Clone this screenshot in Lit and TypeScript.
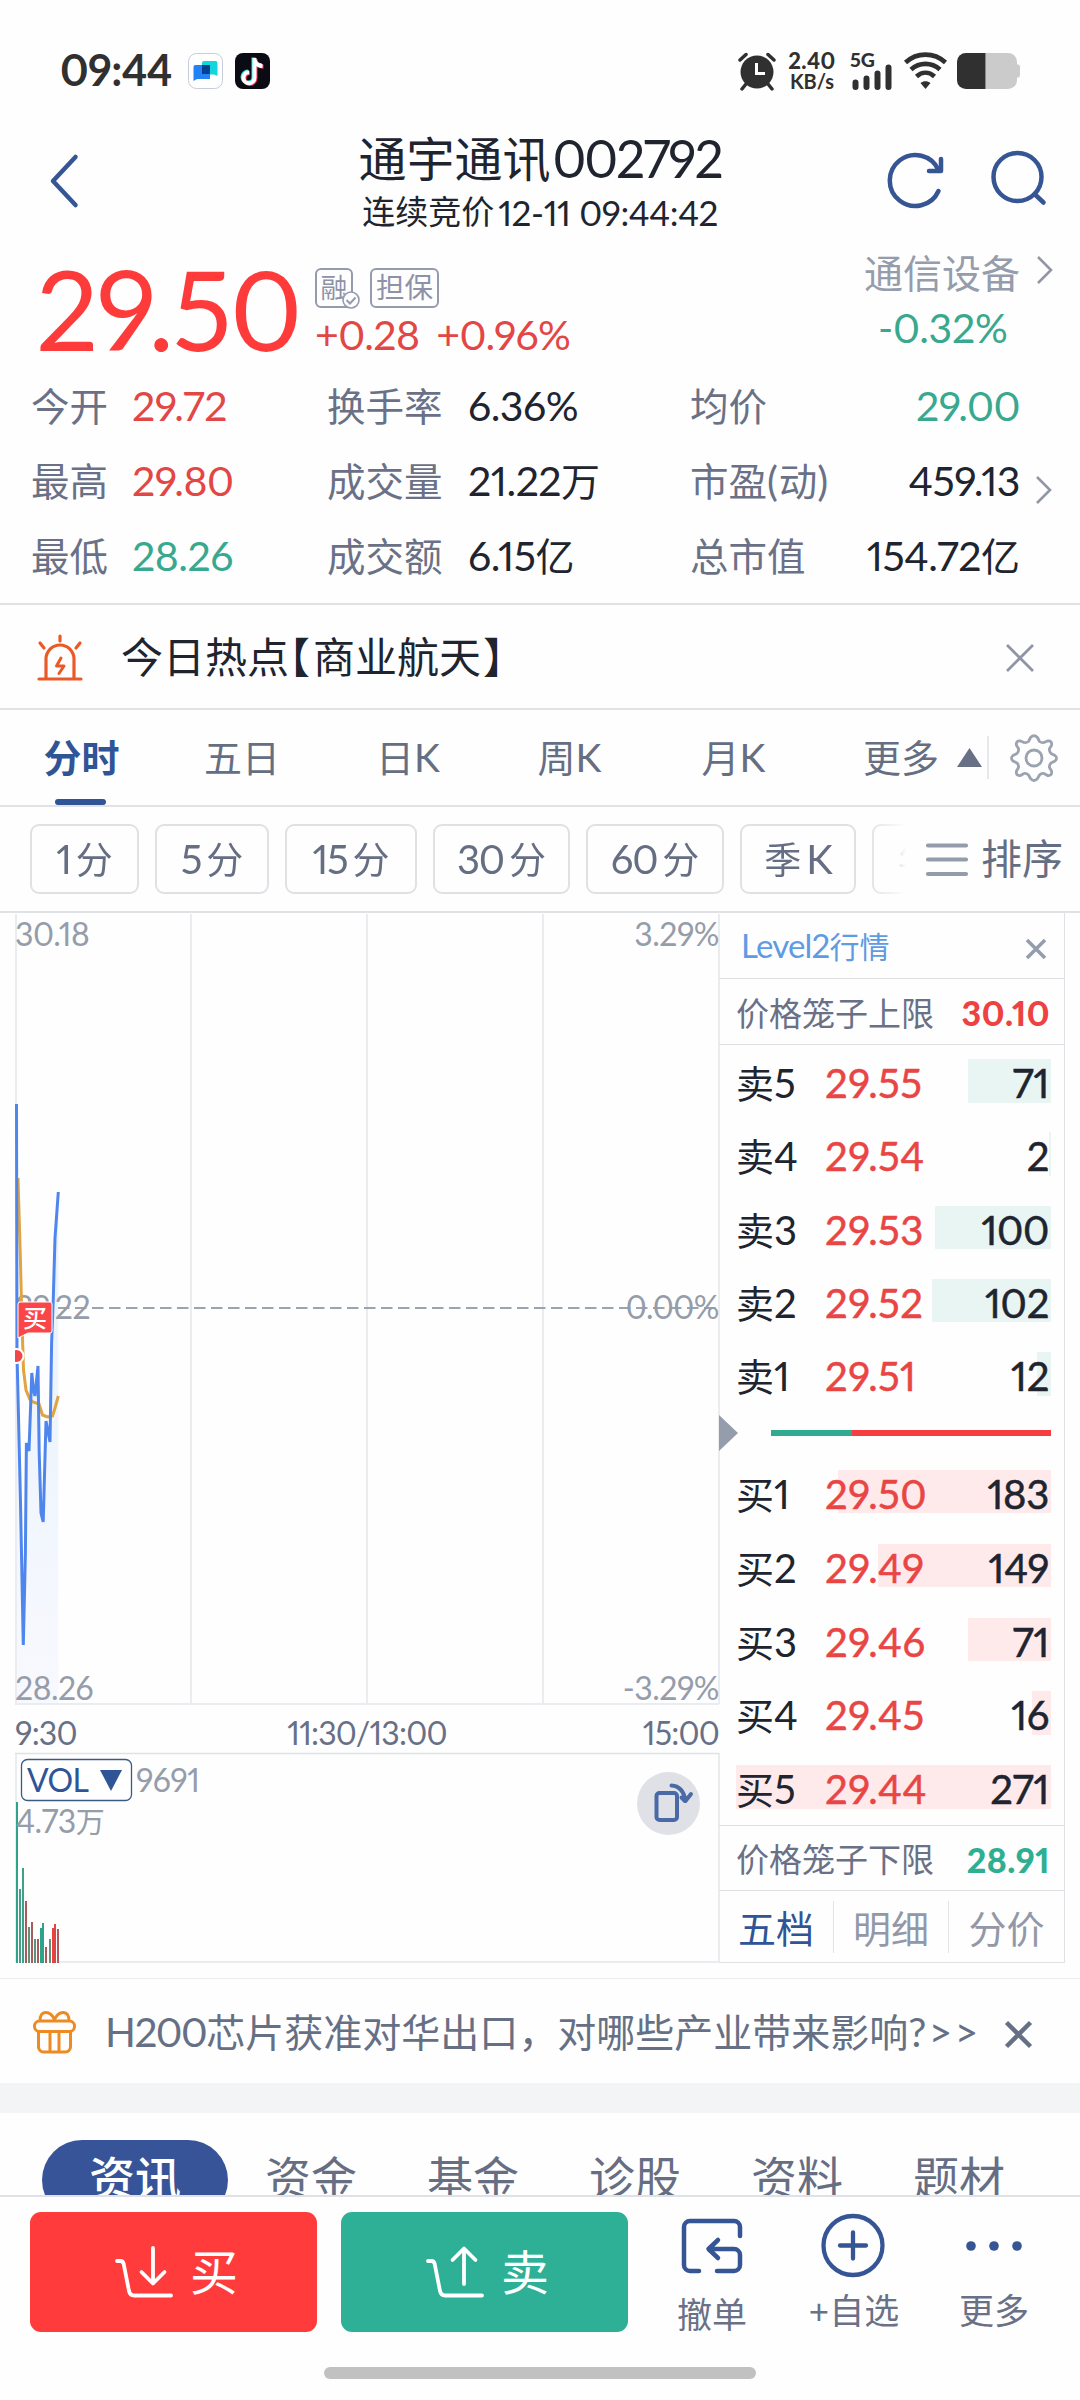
import { LitElement, html, css, svg, nothing } from "lit";
import { customElement } from "lit/decorators.js";

const shared = css`
  * { box-sizing: border-box; }
  .c { font-size: 0.95em; letter-spacing: 0; }
  .row { display: flex; align-items: center; }
  svg { display: block; flex: none; overflow: visible; }
`;

/** Splits a string so that Chinese runs sit slightly smaller than the digits beside them. */
const mix = (s: string) =>
  s.split(/([\u4e00-\u9fff]+)/).map((p) =>
    /[\u4e00-\u9fff]/.test(p) ? html`<span class="c">${p}</span>` : p);

type Tone = "up" | "down" | "flat";

const stats: [string, string, Tone][][] = [
  [["今开", "29.72", "up"], ["换手率", "6.36%", "flat"], ["均价", "29.00", "down"]],
  [["最高", "29.80", "up"], ["成交量", "21.22万", "flat"], ["市盈(动)", "459.13", "flat"]],
  [["最低", "28.26", "down"], ["成交额", "6.15亿", "flat"], ["总市值", "154.72亿", "flat"]],
];

const periods: [string, string, number][] = [
  ["1", "分", 109], ["5", "分", 114], ["15", "分", 132],
  ["30", "分", 137], ["60", "分", 138], ["季", "K", 116],
];

const asks: [string, string, number][] = [
  ["卖5", "29.55", 71], ["卖4", "29.54", 2], ["卖3", "29.53", 100],
  ["卖2", "29.52", 102], ["卖1", "29.51", 12],
];
const bids: [string, string, number][] = [
  ["买1", "29.50", 183], ["买2", "29.49", 149], ["买3", "29.46", 71],
  ["买4", "29.45", 16], ["买5", "29.44", 271],
];

@customElement("minute-chart")
export class MinuteChart extends LitElement {
  static styles = [shared, css`
    :host { display: block; width: 719px; height: 1050px; }
    text { font-family: Lato, "Noto Sans CJK SC", sans-serif; font-size: 32px; fill: #959caa; letter-spacing: -0.5px; }
    .time { fill: #687087; letter-spacing: -0.8px; }
    .end { text-anchor: end; }
    .mid { text-anchor: middle; }
    .vol { fill: #2f5597; letter-spacing: -0.6px; }
    .flag { font-size: 24px; fill: #fff; letter-spacing: 0; font-weight: 500; }
    .small { font-size: 29px; }
  `];

  private price: [number, number][] = [
    [16.5, 191], [17, 440], [20.4, 585], [23.3, 732], [25.4, 640], [26.4, 530], [29, 538], [31.8, 460],
    [33.5, 477], [35, 483], [38, 453], [39.2, 540], [41, 600], [43.2, 609], [46, 508], [50, 529],
    [51.6, 430], [53.3, 385], [55, 325], [58.3, 279],
  ];
  private average: [number, number][] = [
    [18, 265], [20.5, 350], [22, 410], [23.5, 457], [26, 477], [29.8, 486], [33, 489],
    [39, 491], [42.5, 502], [47.5, 504], [52.5, 503], [55, 495], [58.3, 483],
  ];
  private bars: [number, number, number, string][] = [
    [16, 2, 889, "#2fa38a"], [19, 2, 976, "#4a9c88"], [22, 2, 955, "#3fa08a"], [25, 2, 988, "#a85c5a"],
    [28, 2, 1014, "#5c917e"], [31, 2, 1009, "#a85c5a"], [34, 2, 1026, "#5c917e"], [37, 2, 1026, "#a85c5a"],
    [40, 2, 1015, "#2fa38a"], [42, 2, 1010, "#2fa38a"], [45, 2, 1034, "#a85c5a"], [49, 2, 1026, "#5c917e"],
    [52, 2, 1015, "#ee4040"], [54, 2, 1011, "#e04444"], [57, 2, 1016, "#b05a5a"],
  ];

  render() {
    const line = (p: [number, number][]) => p.map((q) => q.join(",")).join(" ");
    return html`<svg width="719" height="1050" viewBox="0 0 719 1050">
      <defs>
        <linearGradient id="wash" x1="0" y1="0" x2="0" y2="1">
          <stop offset="0" stop-color="#e4f0fb"></stop><stop offset="1" stop-color="#f8f9fe"></stop>
        </linearGradient>
        <clipPath id="plot"><rect x="15" y="0" width="705" height="792"></rect></clipPath>
      </defs>
      <polygon points="16,790 ${line(this.price)} 58.3,790" fill="url(#wash)"></polygon>
      <g fill="none" stroke="#ebecef" stroke-width="2">
        <path d="M16 1V791M191 1V791M367 1V791M543 1V791M719 1V791M15 791H719"></path>
        <path d="M16 840V1050M719 888V1050M58 1049H719"></path>
        <path d="M15 840.5H719M719 840V888" stroke="#dfe1e5" stroke-width="1.3"></path>
      </g>
      <path d="M58 395H719" stroke="#9aa3ae" stroke-width="2" stroke-dasharray="11.5 5.5"></path>
      <text x="15" y="33">30.18</text><text class="end" x="719" y="33">3.29%</text>
      <text x="15" y="405.500">29.22</text><text class="end" x="719" y="405.500">0.00%</text>
      <text x="15" y="787">28.26</text><text class="end" x="719" y="787">-3.29%</text>
      <g clip-path="url(#plot)" fill="none" stroke-width="3">
        <polyline points=${line(this.average)} stroke="#e0a440"></polyline>
        <polyline points=${line(this.price)} stroke="#4f86ee"></polyline>
        <circle cx="16.500" cy="443" r="7" fill="#f2474a" stroke="#fff" stroke-width="2"></circle>
      </g>
      <path d="M20 389H50a2 2 0 0 1 2 2V418a2 2 0 0 1-2 2H28L18 425V391a2 2 0 0 1 2-2z" fill="#fa4648" stroke="#fff" stroke-width="1"></path>
      <text class="flag" x="23" y="414">买</text>
      <text class="time" x="15" y="832">9:30</text>
      <text class="time mid" x="367" y="832">11:30/13:00</text>
      <text class="time end" x="719" y="832">15:00</text>
      <rect x="21.500" y="846.500" width="110" height="41" rx="6" fill="#fff" stroke="#3c5a86" stroke-width="1.300"></rect>
      <text class="vol" x="27" y="879">VOL</text>
      <path d="M100 857H122L111 878z" fill="#2f5597"></path>
      <text x="136" y="879">9691</text>
      ${this.bars.map(([x, w, y, c]) => svg`<rect x=${x} y=${y} width=${w} height=${1050 - y} fill=${c}></rect>`)}
      <text x="16" y="920">4.73<tspan class="small">万</tspan></text>
      <circle cx="668.500" cy="890.500" r="31.500" fill="#dfe1e7"></circle>
      <g fill="none" stroke="#4a6aa5" stroke-width="4" stroke-linecap="round" stroke-linejoin="round">
        <rect x="656.500" y="880" width="20.500" height="27" rx="3"></rect>
        <path d="M671.500 872.500C680 873 684 879 685.500 887.500M685 888L681.500 884.500M685.500 888L691 881"></path>
      </g>
    </svg>`;
  }
}

@customElement("order-book")
export class OrderBook extends LitElement {
  static styles = [shared, css`
    :host { display: block; width: 346px; height: 1050px; border-right: 1.5px solid #dfe1e4; border-bottom: 1.5px solid #dfe1e4; }
    .level { height: 65.500px; padding: 2px 18px 0 22px; justify-content: space-between; border-bottom: 1.5px solid #dcdee1; color: #5f9be2; font-size: 33px; letter-spacing: -0.8px; }
    .level .c { font-size: 30px; }
    .level svg { margin-top: 6px; }
    .cage { height: 66.5px; padding: 5px 14px 0 17px; justify-content: space-between; border-bottom: 1.5px solid #dcdee1; font-size: 33px; color: #6a7186; }
    .cage.low { height: 66.5px; border-top: 1.5px solid #dcdee1; margin-top: 16px; padding-top: 4px; }
    .cage b { font-size: 34px; font-weight: 900; letter-spacing: 0.5px; }
    .up { color: #ee4141; }
    .down { color: #2fae92; }
    .asks { padding-top: 14px; display: grid; gap: 29.700px; }
    .bids { display: grid; gap: 30.300px; }
    .quote { position: relative; display: grid; grid-template-columns: 91px 1fr 110px; align-items: center; height: 43.600px; margin: 0 13px 0 15px; font-size: 40px; color: #20242f; }
    .bar { position: absolute; right: 0; top: 0; height: 100%; background: #e8f5f3; }
    .bids .bar { background: #feeaeb; }
    .quote span { position: relative; }
    .name { padding-left: 2px; letter-spacing: 0; }
    .name .c { font-size: 38px; }
    .price { color: #e94545; letter-spacing: 0.5px; -webkit-text-stroke: 0.5px #e94545; }
    .amount { text-align: right; padding-right: 2px; -webkit-text-stroke: 0.5px #20242f; letter-spacing: -0.3px; }
    .ratio { height: 74px; padding-right: 13px; }
    .ratio svg { margin-right: 33px; }
    .sell { height: 6px; width: 81px; background: #30ab92; }
    .buy { height: 6px; flex: 1; background: #f43e40; }
    .tabs { display: grid; grid-template-columns: 115px 115px 1fr; height: 71px; align-items: center; text-align: center; font-size: 38px; color: #9298a8; }
    .tabs div { height: 52px; line-height: 54px; border-right: 1.5px solid #e2e4e8; }
    .tabs div:last-child { border: 0; }
    .tabs .on { color: #2f5597; }
  `];

  private rows(list: [string, string, number][]) {
    return list.map(([n, p, v]) => html`<div class="quote">
      <div class="bar" style="width:${v * 1.163}px"></div>
      <span class="name">${mix(n)}</span><span class="price">${p}</span><span class="amount">${v}</span>
    </div>`);
  }

  render() {
    return html`
      <div class="level row"><span>${mix("Level2行情")}</span>
        <svg width="20" height="20" viewBox="0 0 20 20"><path d="M1 1L19 19M19 1L1 19" stroke="#959cab" stroke-width="3.500"></path></svg></div>
      <div class="cage row"><span>价格笼子上限</span><b class="up">30.10</b></div>
      <div class="asks">${this.rows(asks)}</div>
      <div class="ratio row">
        <svg width="19" height="36" viewBox="0 0 19 36"><path d="M0 0L19 18L0 36z" fill="#959cab"></path></svg>
        <div class="sell"></div><div class="buy"></div></div>
      <div class="bids">${this.rows(bids)}</div>
      <div class="cage low row"><span>价格笼子下限</span><b class="down">28.91</b></div>
      <div class="tabs"><div class="on">五档</div><div>明细</div><div>分价</div></div>`;
  }
}

@customElement("app-root")
export class AppRoot extends LitElement {
  static styles = [shared, css`
    :host { display: block; position: relative; width: 1080px; height: 2400px; overflow: hidden; background: #fefefe;
      font-family: Lato, "Noto Sans CJK SC", sans-serif; font-variant-numeric: proportional-nums; line-height: 1.2; color: #20242f; white-space: nowrap; }
    .up { color: #e24746; }
    .down { color: #38a88f; }
    .flat { color: #20242f; }

    .status { height: 142px; padding: 0 60px 0 60px; color: #303030; }
    .clock { font-size: 43px; font-weight: 700; width: 128px; letter-spacing: -0.6px; margin-top: -2px; }
    .status .apps { display: flex; gap: 12px; flex: 1; }
    .net { width: 50px; margin: 0 13px 0 11px; text-align: center; font-size: 22px; line-height: 21px; font-weight: 900; letter-spacing: 0.4px; }
    .net div:last-child { font-size: 20px; font-weight: 700; letter-spacing: 0; }
    .cell { width: 44px; height: 38px; margin-right: 10px; }
    .cell text { font-size: 19.5px; font-weight: 900; fill: #303030; }
    .wifi { margin-right: 10px; }

    .head { height: 108px; display: grid; grid-template-columns: 51px 229px 520px 1fr; }
    .head .back { margin-top: 13px; }
    .title { display: flex; align-items: center; justify-content: center; height: 60px; margin-top: -13px; font-size: 51.5px; letter-spacing: -2.1px; }
    .title .c { font-size: 48px; margin-right: 2px; }
    .sub { display: flex; align-items: center; justify-content: center; font-size: 35px; letter-spacing: -0.4px; height: 46px; }
    .sub .c { font-size: 33px; margin-right: 4px; }
    .tools { display: flex; gap: 49px; padding: 6px 0 0 88px; }

    .quote { height: 108px; display: grid; grid-template-columns: 315px 1fr 216px; }
    .last { font-size: 110px; line-height: 130px; letter-spacing: -1.9px; color: #fe3b3b; padding-left: 36px; margin-top: -7px; }
    .badges { display: flex; gap: 17px; padding-top: 18px; color: #8d92a8; font-size: 28.500px; }
    .badges div { border: 2px solid #959aaf; border-radius: 6px; height: 40px; padding: 0 4px; line-height: 35px; }
    .badges .margin { width: 38px; position: relative; padding: 0 3.500px; font-size: 27px; }
    .badges .margin svg { position: absolute; right: -9px; bottom: -3px; }
    .delta { display: flex; gap: 17px; font-size: 41px; letter-spacing: -0.6px; padding: 2px 0 0 0; }
    .industry { color: #959cab; font-size: 39px; height: 47px; gap: 17px; }
    .industry svg { margin-top: -8px; }
    .idelta { font-size: 41px; letter-spacing: -0.3px; line-height: 50px; padding: 6px 0 0 14px; }

    .stats { height: 245px; padding-top: 10px; }
    .stat { display: grid; grid-template-columns: 101px 195px 141px 222px 140px 190px 1fr; align-items: center; height: 75px; font-size: 41px; letter-spacing: -0.5px; padding-left: 31px; }
    .stat .k { color: #6a7186; font-size: 41px; letter-spacing: 0.8px; }
    .stat .k .c { font-size: 38.500px; }
    .stat .v5 { text-align: right; }
    .stat svg { margin: 19px 0 0 16px; }

    .hot { height: 107px; border-top: 2px solid #e0e2e5; border-bottom: 2px solid #e0e2e5; padding: 2px 46px 0 36px; font-size: 42px; }
    .hot .txt { flex: 1; margin-left: 37px; }
    .hot .br { font-feature-settings: "halt" 1; }
    .hot .in { padding: 0 2px 0 3px; }

    .tabs { height: 97px; border-bottom: 2px solid #e0e2e5; display: grid; grid-template-columns: 163px 158px 174px 149px 179px 116px 1fr; align-items: center; text-align: center; font-size: 39px; color: #666e83; position: relative; }
    .tabs .more { text-align: right; font-size: 38px; }
    .tabs .c { font-size: 38px; }
    .tabs .on { color: #2f5597; font-weight: 700; position: relative; align-self: stretch; display: flex; align-items: center; justify-content: center; }
    .tabs .on::after { content: ""; position: absolute; left: 55px; width: 51px; bottom: 0; height: 6px; border-radius: 3px; background: #2f5597; }
    .tabs .tail { display: flex; align-items: center; padding-left: 18px; }
    .tabs .sep { width: 2px; height: 43px; background: #e6e8eb; margin: 0 21px 0 5px; }

    .periods { height: 106px; border-bottom: 2px solid #e0e2e5; padding: 0 16px 0 30px; display: flex; align-items: center; color: #666e83; font-size: 40px; }
    .chips { display: flex; gap: 16px; width: 882px; overflow: hidden; height: 70px; -webkit-mask-image: linear-gradient(90deg, #000 838px, transparent 876px); mask-image: linear-gradient(90deg, #000 838px, transparent 876px); }
    .chip { flex: none; height: 70px; border: 2px solid #dfe1e5; border-radius: 9px; display: flex; align-items: center; justify-content: center; gap: 5px; letter-spacing: -1.2px; }
    .chip .c { font-size: 37px; }
    .chip.next { width: 110px; justify-content: flex-start; padding-left: 24px; }
    .sort { display: flex; align-items: center; gap: 13px; flex: 1; margin-left: 14px; font-size: 41px; }

    .market { display: flex; height: 1065px; }

    .ticker { height: 105px; border-top: 1.500px solid #ecedf0; padding: 2px 48px 0 33px; color: #667085; font-size: 40.500px; letter-spacing: -1.500px; }
    .ticker .txt { flex: 1; margin-left: 28px; }
    .ticker .c { font-size: 39px; }
    .ticker .tip { letter-spacing: 2.500px; }
    .ticker .x { margin-top: 5px; }
    .band { height: 30px; background: #f3f4f6; }
    .news { height: 84px; overflow: hidden; padding: 27px 0 0 42px; display: grid; grid-template-columns: 186px 166px 158px 166px 158px 166px; font-size: 46px; color: #666e83; text-align: center; border-bottom: 2px solid #dfe1e4; }
    .news div { height: 80px; line-height: 76px; }
    .news .on { background: #375498; color: #fff; border-radius: 40px; font-weight: 500; }

    .footer { display: flex; padding: 15px 0 0 30px; height: 170px; }
    .btn { width: 287px; height: 120px; border-radius: 11px; color: #fff; font-size: 48px; display: flex; align-items: center; justify-content: center; gap: 16px; background: #ff3b3b; margin-right: 24px; padding-left: 6px; }
    .btn.sell { background: #2db096; }
    .btn span { margin-top: -1px; }
    .act { display: flex; flex-direction: column; align-items: center; color: #6a7186; font-size: 35px; }
    .act span { height: 42px; line-height: 41px; font-size: 35px; }
    .home { width: 432px; height: 12px; border-radius: 6px; background: #c1c1c1; margin: 0 0 0 324px; }
  `];

  private chevron = svg`<path d="M1 1L14 14L1 27" fill="none" stroke="#9197a6" stroke-width="2.6"></path>`;

  render() {
    return html`
      <div class="status row">
        <div class="clock">09:44</div>
        <div class="apps">
          <svg width="35" height="36" viewBox="0 0 35 36">
            <rect x="0.500" y="0.500" width="34" height="35" rx="8" fill="#fff" stroke="#c5ccda"></rect>
            <path d="M16 8H27.500a2 2 0 0 1 2 2V23L26 21.500H14V10a2 2 0 0 1 2-2z" fill="#13d5dc"></path>
            <path d="M7.500 12H22V26H9L5.500 28V14a2 2 0 0 1 2-2z" fill="#2383f5"></path>
            <rect x="14" y="12" width="8" height="9" fill="#053f94"></rect>
          </svg>
          <svg width="35" height="36" viewBox="0 0 35 36">
            <rect width="35" height="36" rx="8" fill="#0b0b14"></rect>
            <g fill="none" stroke-width="4">
              <path d="M18.500 4.500V24a5.500 5.500 0 1 1-5.500-5.500M18.500 6c1 4 4 6 8 6.200" stroke="#29e8e4"></path>
              <path d="M20.500 6V25.500a5.500 5.500 0 1 1-5.500-5.500M20.500 7.500c1 4 4 6 8 6.200" stroke="#fb2d58"></path>
              <path d="M19.500 5V24.700a5.500 5.500 0 1 1-5.500-5.500M19.500 6.700c1 4 4 6 8 6.200" stroke="#fff"></path>
            </g>
          </svg>
        </div>
        <svg width="38" height="38" viewBox="0 0 38 38">
          <circle cx="19" cy="20" r="16.500" fill="#303030"></circle>
          <path d="M2 8L8 2.500M36 8L30 2.500M4 37L8 32M34 37L30 32" stroke="#303030" stroke-width="3.500" stroke-linecap="round"></path>
          <path d="M18.500 11V21.500H27" stroke="#fff" stroke-width="3" fill="none"></path>
        </svg>
        <div class="net"><div>2.40</div><div>KB/s</div></div>
        <svg class="cell" viewBox="0 0 44 38">
          <text x="0" y="15">5G</text>
          <path d="M5.500 30.500V35M16.500 26.500V35M27.500 21.500V35M38.500 15.500V35" stroke="#303030" stroke-width="6" stroke-linecap="round"></path>
        </svg>
        <svg class="wifi" width="43" height="38" viewBox="0 0 43 38">
          <g fill="none" stroke="#303030" stroke-width="4.600">
            <path d="M1.500 10.500C13 0 30 0 41.500 10.500"></path><path d="M7 17.500C15.500 10 27.500 10 36 17.500"></path><path d="M12.500 24.500C18 19.500 25 19.500 30.500 24.500"></path>
          </g>
          <path d="M16.500 31c3-2.500 7-2.500 10 0L21.500 37z" fill="#303030"></path>
        </svg>
        <svg width="63" height="36" viewBox="0 0 63 38" preserveAspectRatio="none">
          <path d="M28.500 0H51a9 9 0 0 1 9 9V12a3 3 0 0 1 3 3V23a3 3 0 0 1-3 3V29a9 9 0 0 1-9 9H28.500z" fill="#cbcbcb"></path>
          <path d="M9 0H28.500V38H9a9 9 0 0 1-9-9V9a9 9 0 0 1 9-9z" fill="#303030"></path>
        </svg>
      </div>

      <div class="head">
        <div></div>
        <svg class="back" width="27" height="52" viewBox="0 0 27 52"><path d="M24.500 2L2 26L24.500 50" fill="none" stroke="#355594" stroke-width="4.500" stroke-linecap="round" stroke-linejoin="round"></path></svg>
        <div>
          <div class="title">${mix("通宇通讯002792")}</div>
          <div class="sub">${mix("连续竞价12-11 09:44:42")}</div>
        </div>
        <div class="tools">
          <svg width="55" height="58" viewBox="0 0 55 58"><g fill="none" stroke="#355594" stroke-width="4.500">
            <path d="M50.500 43A25.500 25.500 0 1 1 50.500 22" stroke-linecap="round"></path><path d="M41 23H53V11" stroke-linejoin="round" stroke-linecap="round"></path></g></svg>
          <svg width="55" height="58" viewBox="0 0 55 58"><g fill="none" stroke="#355594" stroke-width="4.500" stroke-linecap="round">
            <circle cx="25.500" cy="29" r="24"></circle><path d="M42.500 46L51.500 54.500"></path></g></svg>
        </div>
      </div>

      <div class="quote">
        <div class="last">29.50</div>
        <div>
          <div class="badges">
            <div class="margin">融<svg width="18" height="18" viewBox="0 0 18 18"><circle cx="9" cy="9" r="8" fill="#fefefe" stroke="#959aaf" stroke-width="1.600"></circle><path d="M4.500 9L8 12.500L13.500 6.500" fill="none" stroke="#959aaf" stroke-width="2"></path></svg></div>
            <div>担保</div>
          </div>
          <div class="delta up"><span>+0.28</span><span>+0.96%</span></div>
        </div>
        <div>
          <div class="industry row">通信设备<svg width="15" height="28" viewBox="0 0 15 28">${this.chevron}</svg></div>
          <div class="idelta down">-0.32%</div>
        </div>
      </div>

      <div class="stats">
        ${stats.map((r, i) => html`<div class="stat">
          ${r.map(([k, v, t], j) => html`<span class="k">${mix(k)}</span><span class="${t} ${j === 2 ? "v5" : ""}">${mix(v)}</span>`)}
          ${i === 1 ? html`<svg width="15" height="28" viewBox="0 0 15 28">${this.chevron}</svg>` : nothing}
        </div>`)}
      </div>

      <div class="hot row">
        <svg width="48" height="48" viewBox="0 0 48 48"><g fill="none" stroke="#ea5a28" stroke-width="3.200" stroke-linecap="round" stroke-linejoin="round">
          <path d="M10 44V25a14 14 0 0 1 28 0V44M3 45H45" ></path><path d="M24 2V7M4 9L8 14M44 9L40 14"></path>
          <path d="M25 24L20.500 32H28L23 39.500" stroke-width="3"></path></g></svg>
        <span class="txt">今日热点<span class="br">【</span><span class="in">商业航天</span><span class="br">】</span></span>
        <svg width="28" height="28" viewBox="0 0 28 28"><path d="M1 1L27 27M27 1L1 27" stroke="#8f95a4" stroke-width="2.800"></path></svg>
      </div>

      <div class="tabs">
        <div class="on">${mix("分时")}</div>
        <div>${mix("五日")}</div><div>${mix("日K")}</div><div>${mix("周K")}</div><div>${mix("月K")}</div>
        <div class="more">更多</div>
        <div class="tail">
          <svg width="25" height="19" viewBox="0 0 25 19"><path d="M12.500 0L25 19H0z" fill="#687086"></path></svg>
          <div class="sep"></div>
          <svg width="48" height="48" viewBox="0 0 48 48"><g fill="none" stroke="#9ba2b0" stroke-width="2.800" stroke-linejoin="round">
            <path d="M20.500 3.500Q24 0 27.500 3.500L29.500 7.500Q31.500 9 34 8.500L37.500 7Q42.500 6.500 41.500 11.500L39.500 14.500Q39 17.500 41 19.500L45 21.500Q48 24 45 27L41 29Q39 31 39.500 33.500L41.500 37Q42.500 42 37.500 41.500L34 39.500Q31.500 39 29.500 41L27.500 44.500Q24 48.500 20.500 44.500L18.500 41Q16.500 39 14 39.500L10.500 41.500Q5.500 42 6.500 37L8.500 33.500Q9 31 7 29L3 27Q0 24 3 21.500L7 19.500Q9 17.500 8.500 14.500L6.500 11.500Q5.500 6.500 10.500 7L14 8.500Q16.500 9 18.500 7.500z"></path>
            <circle cx="24" cy="24" r="8"></circle></g></svg>
        </div>
      </div>

      <div class="periods">
        <div class="chips">
          ${periods.map(([a, b, w]) => html`<div class="chip" style="width:${w}px"><span>${mix(a)}</span><span>${mix(b)}</span></div>`)}
          <div class="chip next">${mix("年")}K</div>
        </div>
        <div class="sort">
          <svg width="42" height="33" viewBox="0 0 42 33"><path d="M2 2.500H40M2 16.500H40M2 31H40" stroke="#949bab" stroke-width="4.200" stroke-linecap="round"></path></svg>
          <span>排序</span>
        </div>
      </div>

      <div class="market"><minute-chart></minute-chart><order-book></order-book></div>

      <div class="ticker row">
        <svg width="44" height="44" viewBox="0 0 44 44"><g fill="none" stroke="#ee8a24" stroke-width="3" stroke-linejoin="round">
          <rect x="1.500" y="11" width="40" height="10.500" rx="5"></rect>
          <path d="M5.500 21.500V37a5 5 0 0 0 5 5H32.500a5 5 0 0 0 5-5V21.500M17 21.500V42M26 21.500V42"></path>
          <path d="M7 11C7 0 17 0 21.500 9.500C26 0 36 0 36 11"></path></g></svg>
        <span class="txt">${mix("H200芯片获准对华出口，对哪些产业带来影响")}<span class="tip">?&gt;&gt;</span></span>
        <svg class="x" width="27" height="27" viewBox="0 0 27 27"><path d="M1.500 1.500L25.500 25.500M25.500 1.500L1.500 25.500" stroke="#667085" stroke-width="4.500"></path></svg>
      </div>
      <div class="band"></div>
      <div class="news"><div class="on">资讯</div><div>资金</div><div>基金</div><div>诊股</div><div>资料</div><div>题材</div></div>

      <div class="footer">
        <div class="btn"><svg width="59" height="52" viewBox="0 0 59 52"><g fill="none" stroke="#fff" stroke-width="3.800" stroke-linecap="round" stroke-linejoin="round">
          <path d="M2 15H5.500Q8 15 8.700 18L14 45Q15 49.500 19 49.500H56"></path><path d="M38 2V36M26.500 26L38 37.500L49.500 26"></path></g></svg><span>买</span></div>
        <div class="btn sell"><svg width="59" height="52" viewBox="0 0 59 52"><g fill="none" stroke="#fff" stroke-width="3.800" stroke-linecap="round" stroke-linejoin="round">
          <path d="M2 15H5.500Q8 15 8.700 18L14 45Q15 49.500 19 49.500H56"></path><path d="M38 38V3M26.500 14L38 2.500L49.500 14"></path></g></svg><span>卖</span></div>
        <div class="act" style="width:120px">
          <svg width="120" height="82" viewBox="0 0 120 82"><g fill="none" stroke="#355594" stroke-width="4.500" stroke-linecap="round" stroke-linejoin="round">
            <path d="M88 24V15a6 6 0 0 0-6-6H38a6 6 0 0 0-6 6V53a6 6 0 0 0 6 6H47M65 59H82a6 6 0 0 0 6-6V43a6 6 0 0 0-6-6H57M66 28L56.500 37L66 46"></path></g></svg>
          <span>撤单</span></div>
        <div class="act" style="width:164px">
          <svg width="164" height="78" viewBox="0 0 164 78"><g fill="none" stroke="#355594" stroke-width="4.300" stroke-linecap="round">
            <circle cx="81" cy="33.500" r="29.500"></circle><path d="M68 33.500H94M81 20.500V46.500"></path></g></svg>
          <span>${mix("+自选")}</span></div>
        <div class="act" style="width:116px">
          <svg width="116" height="78" viewBox="0 0 116 78"><g fill="#355594"><circle cx="35" cy="34" r="4.800"></circle><circle cx="58" cy="34" r="4.800"></circle><circle cx="81" cy="34" r="4.800"></circle></g></svg>
          <span>更多</span></div>
      </div>
      <div class="home"></div>`;
  }
}
